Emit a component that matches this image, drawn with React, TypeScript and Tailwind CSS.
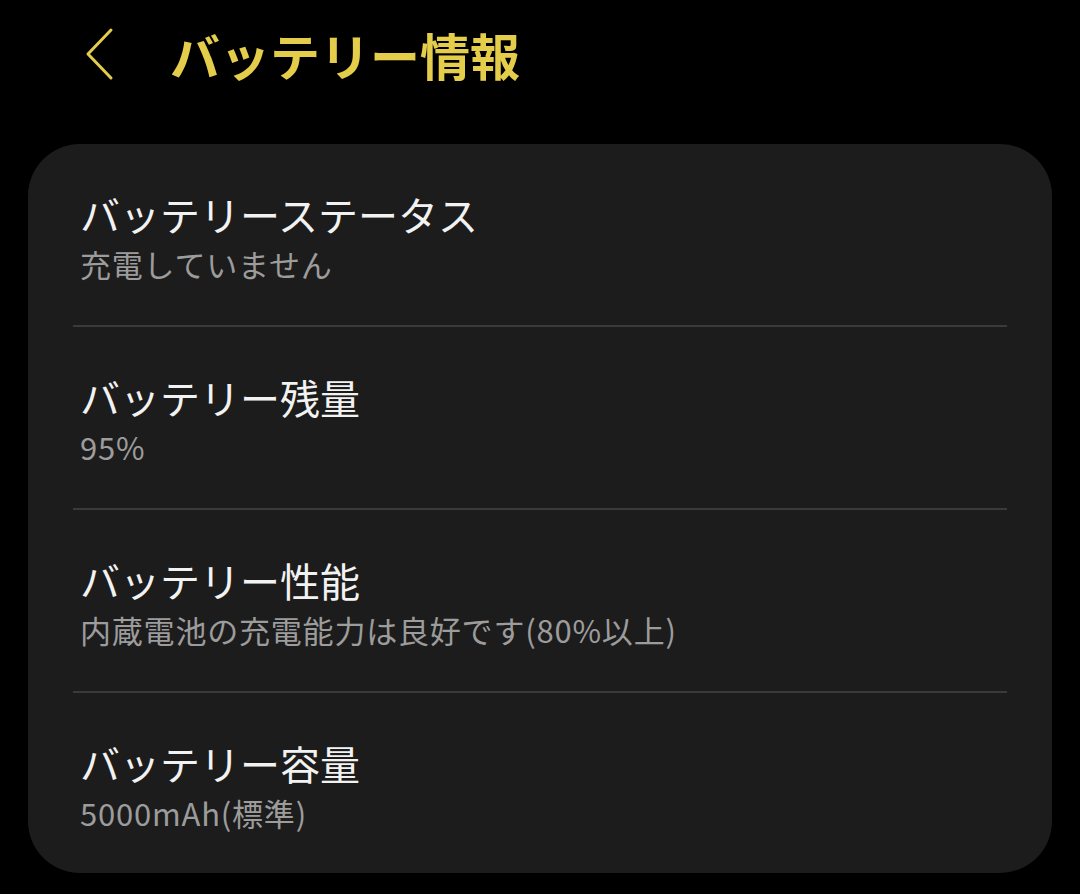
import React from "react";

const items = [
  { title: "バッテリーステータス", sub: "充電していません" },
  { title: "バッテリー残量", sub: "95%" },
  { title: "バッテリー性能", sub: "内蔵電池の充電能力は良好です(80%以上)" },
  { title: "バッテリー容量", sub: "5000mAh(標準)" },
];

export default function App() {
  return (
    <div
      className="w-[1080px] h-[894px] bg-black overflow-hidden"
      style={{ fontFamily: '"Noto Sans CJK JP", "Noto Sans", sans-serif' }}
    >
      <div className="h-[108px] flex items-center">
        <svg className="ml-[83px]" width="32" height="54" viewBox="0 0 32 54" fill="none">
          <path d="M28 3 L5 27 L28 51" stroke="#e3cd4a" strokeWidth="3" strokeLinecap="round" strokeLinejoin="round" />
        </svg>
        <div className="ml-[55px] text-[50px] leading-none font-bold text-[#e3cd4a]">
          バッテリー情報
        </div>
      </div>
      <div className="mt-[36px] mx-[28px] h-[729px] bg-[#1c1c1c] rounded-[52px] overflow-hidden">
        {items.map((it, i) => (
          <div key={i}>
            {i > 0 && <div className="mx-[45px] h-[2px] bg-[#3a3a3a]" />}
            <div className="pt-[42px] pb-[39px] px-[52px]">
              <div className="text-[40px] leading-[56px] text-[#f2f2f2]">{it.title}</div>
              <div className="text-[31px] leading-[44px] text-[#9c9c9c] tracking-[0.8px]">{it.sub}</div>
            </div>
          </div>
        ))}
      </div>
    </div>
  );
}
